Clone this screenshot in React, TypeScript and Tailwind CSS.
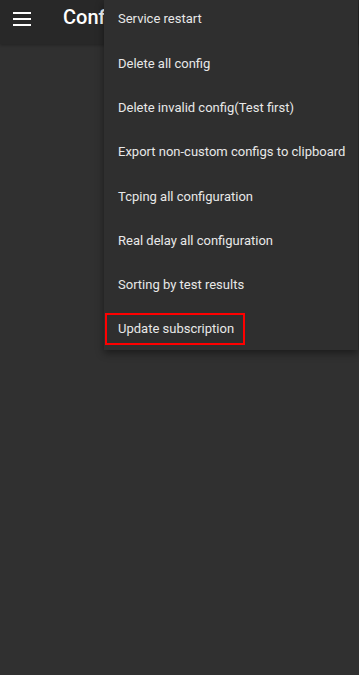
import React from "react";

const items = [
  "Service restart",
  "Delete all config",
  "Delete invalid config(Test first)",
  "Export non-custom configs to clipboard",
  "Tcping all configuration",
  "Real delay all configuration",
  "Sorting by test results",
  "Update subscription",
];

export default function App() {
  return (
    <div
      className="relative w-[359px] h-[675px] bg-[#303030] overflow-hidden"
      style={{ fontFamily: "Roboto, 'Liberation Sans', sans-serif" }}
    >
      <div className="h-[44px] bg-[#282828] flex items-center shadow-[0_1px_3px_rgba(0,0,0,0.3)]">
        <div className="w-[44px] h-[40px] flex items-center justify-center">
          <svg width="18" height="14" viewBox="0 0 18 14" className="mt-[-6px]">
            <rect x="0" y="0" width="18" height="2" fill="#ffffff" />
            <rect x="0" y="6" width="18" height="2" fill="#ffffff" />
            <rect x="0" y="12" width="18" height="2" fill="#ffffff" />
          </svg>
        </div>
        <div className="ml-[19px] mt-[-6px] w-[41px] overflow-hidden whitespace-nowrap">
          <span className="text-white text-[20px] font-medium leading-none">Configurations</span>
        </div>
      </div>

      <div className="absolute left-[104px] top-0 w-[254px] h-[350px] bg-[#2f2f2f] shadow-[0_3px_8px_rgba(0,0,0,0.45)] flex flex-col">
        <div className="mt-[-3px] flex flex-col">
          {items.map((t, i) => (
            <div key={i} className="h-[44.3px] flex items-center pl-[14px]">
              {i === items.length - 1 ? (
                <div className="ml-[-13px] border-2 border-[#ff0000] w-[140px] h-[32px] flex items-center pl-[11px]">
                  <span className="text-[13px] text-[#e8e8e8]">{t}</span>
                </div>
              ) : (
                <span className="text-[13px] text-[#e8e8e8]">{t}</span>
              )}
            </div>
          ))}
        </div>
      </div>
    </div>
  );
}
